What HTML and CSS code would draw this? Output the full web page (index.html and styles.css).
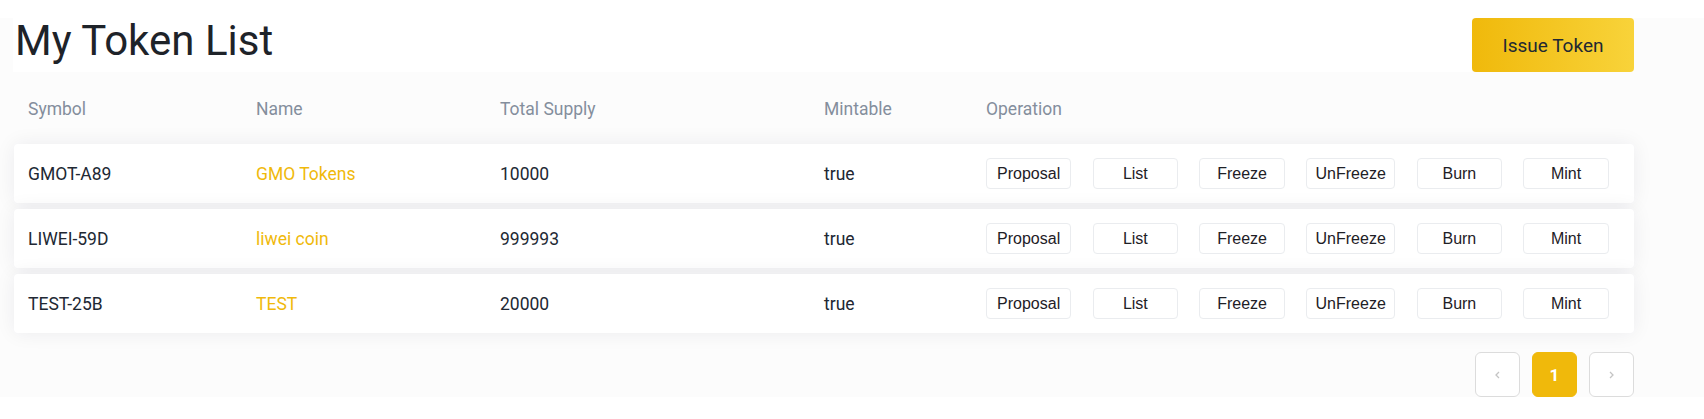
FILE: index.html
```html
<!DOCTYPE html>
<html lang="en">
<head>
  <meta charset="UTF-8">
  <meta name="viewport" content="width=device-width, initial-scale=1.0">
  <title>My Token List</title>
  <link rel="stylesheet" href="styles.css">
</head>
<body>
  <div class="page">
    <div class="page-head">
      <h1 class="page-title">My Token List</h1>
      <button type="button" class="issue-btn">Issue Token</button>
    </div>

    <div class="token-table">
      <div class="token-row head">
        <div class="cell">Symbol</div>
        <div class="cell">Name</div>
        <div class="cell">Total Supply</div>
        <div class="cell">Mintable</div>
        <div class="cell">Operation</div>
      </div>

      <div class="token-row">
        <div class="cell">GMOT-A89</div>
        <div class="cell name">GMO Tokens</div>
        <div class="cell supply">10000</div>
        <div class="cell">true</div>
        <div class="cell ops">
          <button type="button" class="op-btn">Proposal</button>
          <button type="button" class="op-btn">List</button>
          <button type="button" class="op-btn">Freeze</button>
          <button type="button" class="op-btn">UnFreeze</button>
          <button type="button" class="op-btn">Burn</button>
          <button type="button" class="op-btn">Mint</button>
        </div>
      </div>

      <div class="token-row">
        <div class="cell">LIWEI-59D</div>
        <div class="cell name">liwei coin</div>
        <div class="cell supply">999993</div>
        <div class="cell">true</div>
        <div class="cell ops">
          <button type="button" class="op-btn">Proposal</button>
          <button type="button" class="op-btn">List</button>
          <button type="button" class="op-btn">Freeze</button>
          <button type="button" class="op-btn">UnFreeze</button>
          <button type="button" class="op-btn">Burn</button>
          <button type="button" class="op-btn">Mint</button>
        </div>
      </div>

      <div class="token-row">
        <div class="cell">TEST-25B</div>
        <div class="cell name">TEST</div>
        <div class="cell supply">20000</div>
        <div class="cell">true</div>
        <div class="cell ops">
          <button type="button" class="op-btn">Proposal</button>
          <button type="button" class="op-btn">List</button>
          <button type="button" class="op-btn">Freeze</button>
          <button type="button" class="op-btn">UnFreeze</button>
          <button type="button" class="op-btn">Burn</button>
          <button type="button" class="op-btn">Mint</button>
        </div>
      </div>
    </div>

    <div class="pager">
      <button type="button" class="pager-btn">
        <svg width="5" height="8" viewBox="0 0 5 8"><path d="M4 1L1 4l3 3" fill="none" stroke="#c4c4c4" stroke-width="1.3"/></svg>
      </button>
      <button type="button" class="pager-btn active">1</button>
      <button type="button" class="pager-btn">
        <svg width="5" height="8" viewBox="0 0 5 8"><path d="M1 1l3 3-3 3" fill="none" stroke="#c4c4c4" stroke-width="1.3"/></svg>
      </button>
    </div>
  </div>
</body>
</html>
```

FILE: styles.css
```css
body { margin: 0; background: #fff; font-family: Roboto, "Noto Sans", sans-serif; color: #212833; }
.page { margin-top: 18px; background: #fcfcfc; padding-bottom: 0; }
.page-head { display: flex; height: 54px; padding-left: 13px; padding-right: 70px; }
.page-title { flex: 1; margin: 0; padding-left: 2px; background: #fff; font-size: 42px; font-weight: 400; line-height: 46px; color: #1e2329; }
.issue-btn { width: 162px; height: 54px; border: none; border-radius: 4px; background: linear-gradient(90deg, #f0b90b, #f8d33a); font-family: Roboto, sans-serif; font-size: 19px; color: #212833; cursor: pointer; }

.token-table { margin: 0 70px 0 14px; }
.token-row { display: grid; grid-template-columns: 228px 244px 324px 162px 1fr; align-items: center; height: 59px; margin-bottom: 6px; background: #fff; border-radius: 4px; box-shadow: 0 0 20px rgba(30, 35, 60, 0.07); font-size: 17.5px; }
.token-row.head { height: 72px; margin-bottom: 0; background: transparent; box-shadow: none; color: #848e9c; padding-top: 2px; box-sizing: border-box; }
.token-row:last-child { margin-bottom: 0; }
.cell { padding-left: 14px; white-space: nowrap; }
.cell.name { color: #f0b90b; }
.cell.ops { display: flex; gap: 21.4px; }
.op-btn { min-width: 85.3px; height: 31px; padding: 0 8.5px; border: 1px solid #eaecef; border-radius: 4px; background: #fff; font-family: "Liberation Sans", Arial, sans-serif; font-size: 16px; color: #1e2026; cursor: pointer; }

.pager { display: flex; justify-content: flex-end; gap: 12px; margin: 19px 70px 0 0; }
.pager-btn { display: flex; align-items: center; justify-content: center; width: 45px; height: 45px; padding: 0; border: 1px solid #dcdcdc; border-radius: 6px; background: #fff; cursor: pointer; }
.pager-btn.active { border-color: #f0b90b; background: #f0b90b; color: #fff; font-family: Roboto, sans-serif; font-size: 17px; font-weight: 700; }
```
